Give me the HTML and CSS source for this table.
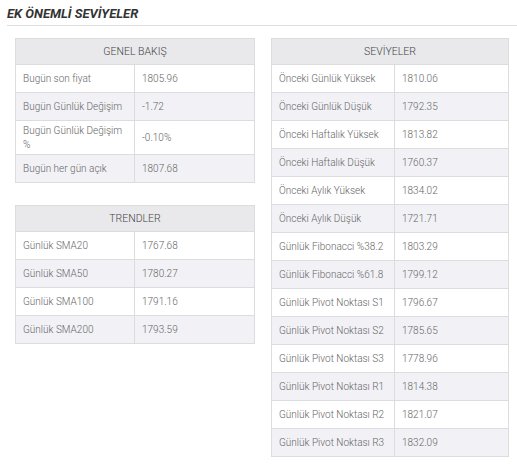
FILE: index.html
```html
<!DOCTYPE html>
<html lang="tr">
<head>
<meta charset="utf-8">
<link rel="stylesheet" href="styles.css">
</head>
<body>
<div class="page">
  <h2 class="title">EK ÖNEMLİ SEVİYELER</h2>
  <div class="cols">
    <div class="col">
      <table class="tbl left">
        <thead><tr><th colspan="2">GENEL BAKIŞ</th></tr></thead>
        <tbody>
          <tr><td>Bugün son fiyat</td><td>1805.96</td></tr>
          <tr><td>Bugün Günlük Değişim</td><td>-1.72</td></tr>
          <tr><td>Bugün Günlük Değişim %</td><td>-0.10%</td></tr>
          <tr><td>Bugün her gün açık</td><td>1807.68</td></tr>
        </tbody>
      </table>
      <table class="tbl left">
        <thead><tr><th colspan="2">TRENDLER</th></tr></thead>
        <tbody>
          <tr><td>Günlük SMA20</td><td>1767.68</td></tr>
          <tr><td>Günlük SMA50</td><td>1780.27</td></tr>
          <tr><td>Günlük SMA100</td><td>1791.16</td></tr>
          <tr><td>Günlük SMA200</td><td>1793.59</td></tr>
        </tbody>
      </table>
    </div>
    <div class="col">
      <table class="tbl right">
        <thead><tr><th colspan="2">SEVİYELER</th></tr></thead>
        <tbody>
          <tr><td>Önceki Günlük Yüksek</td><td>1810.06</td></tr>
          <tr><td>Önceki Günlük Düşük</td><td>1792.35</td></tr>
          <tr><td>Önceki Haftalık Yüksek</td><td>1813.82</td></tr>
          <tr><td>Önceki Haftalık Düşük</td><td>1760.37</td></tr>
          <tr><td>Önceki Aylık Yüksek</td><td>1834.02</td></tr>
          <tr><td>Önceki Aylık Düşük</td><td>1721.71</td></tr>
          <tr><td>Günlük Fibonacci %38.2</td><td>1803.29</td></tr>
          <tr><td>Günlük Fibonacci %61.8</td><td>1799.12</td></tr>
          <tr><td>Günlük Pivot Noktası S1</td><td>1796.67</td></tr>
          <tr><td>Günlük Pivot Noktası S2</td><td>1785.65</td></tr>
          <tr><td>Günlük Pivot Noktası S3</td><td>1778.96</td></tr>
          <tr><td>Günlük Pivot Noktası R1</td><td>1814.38</td></tr>
          <tr><td>Günlük Pivot Noktası R2</td><td>1821.07</td></tr>
          <tr><td>Günlük Pivot Noktası R3</td><td>1832.09</td></tr>
        </tbody>
      </table>
    </div>
  </div>
</div>
</body>
</html>
```
FILE: styles.css
```css
* { box-sizing: border-box; }
html, body { margin: 0; padding: 0; background: #fff; }
body { font-family: Roboto, "Noto Sans", sans-serif; }
.page { padding: 6px 0 0 7px; }
.title {
  margin: 0;
  font-size: 13px;
  font-weight: 700;
  font-style: italic;
  color: #333;
  line-height: 16px;
  padding-bottom: 3px;
  border-bottom: 1px solid #dedede;
}
.cols { display: flex; margin-top: 12px; }
.col { padding: 0 8px; }
.col:first-child { width: 256px; }
.col:last-child { width: 254px; }
.tbl {
  width: 100%;
  border-collapse: collapse;
  font-size: 10px;
  font-weight: 300;
  color: #666;
  margin-bottom: 22px;
}
.tbl th {
  background: #e9e9ec;
  border: 1px solid #dcdcdf;
  font-weight: 300;
  font-size: 10.5px;
  color: #444;
  height: 26px;
  padding: 0 7px;
  text-align: center;
}
.tbl td {
  border: 1px solid #dcdcdf;
  height: 28px;
  padding: 3px 7px 2px;
  line-height: 14px;
  vertical-align: middle;
}
.tbl tbody tr:nth-child(even) td { background: #f2f2f6; }
.left td:first-child { width: 119px; }
.right td:first-child { width: 123px; }
```
